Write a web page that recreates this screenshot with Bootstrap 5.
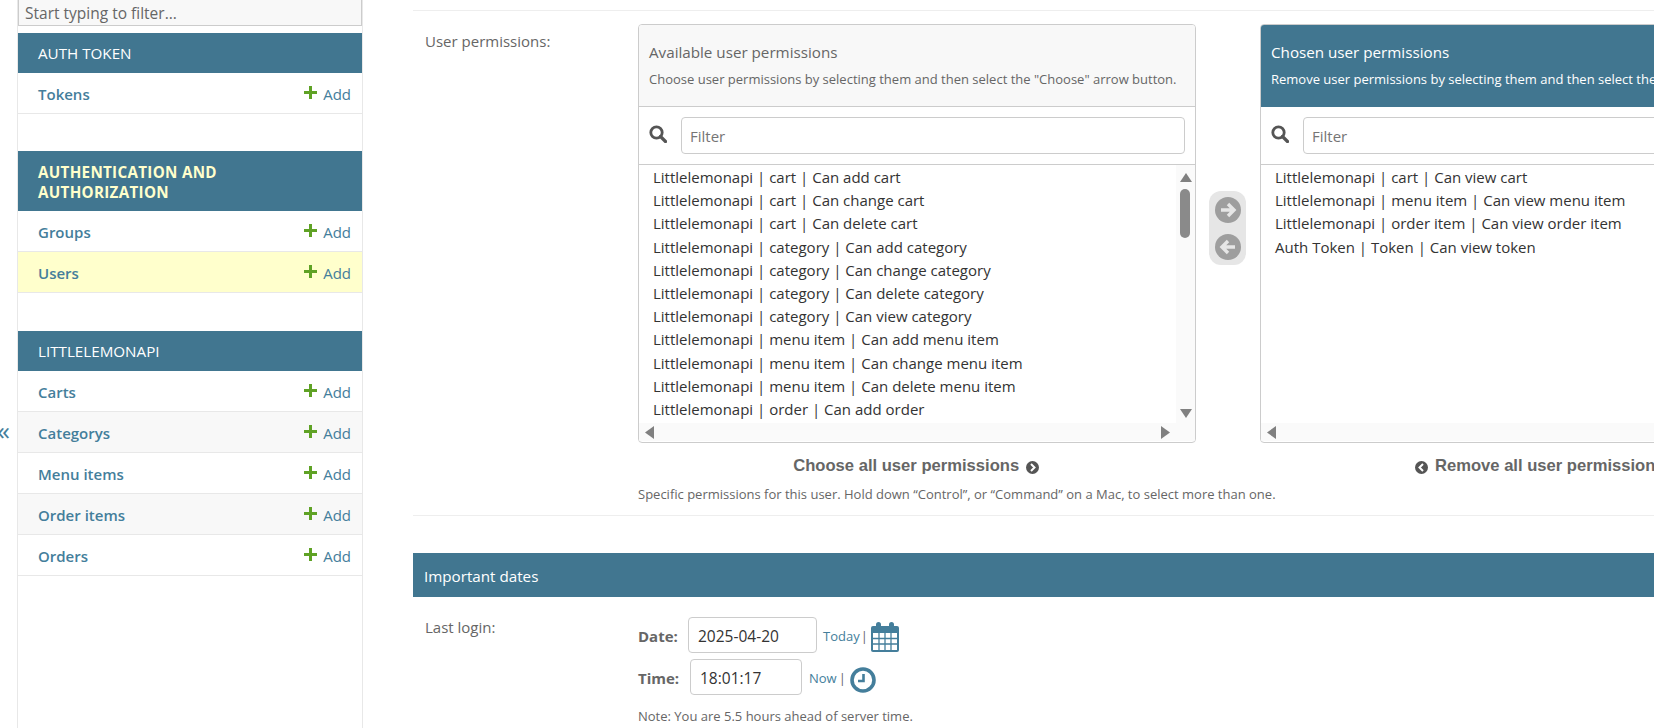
<!DOCTYPE html>
<html lang="en">
<head>
  <meta charset="UTF-8">
  <meta name="viewport" content="width=device-width, initial-scale=1.0">
  <title>Change user | Django site admin</title>
  <link href="https://cdn.jsdelivr.net/npm/bootstrap@5.3.0/dist/css/bootstrap.min.css" rel="stylesheet">
  <style>
    html, body { height: 728px; overflow: hidden; }
    body { font-family: "Open Sans", "Noto Sans", sans-serif; font-size: 15px; color: #666; background: #fff; }
    a { color: #447e9b; text-decoration: none; }

    .toggle-col { width: 17px; flex: none; color: #447e9b; font-size: 26px; line-height: 1; padding-top: 417px; margin-left: -3px; margin-right: 3px; }
    .side-nav { width: 346px; flex: none; height: 728px; border-left: 1px solid #e8e8e8; border-right: 1px solid #e8e8e8; }
    .side-filter { display: block; width: 100%; height: 26px; margin-bottom: 7px; padding: 0 6px; background: #f8f8f8; border: 1px solid #ccc; border-top: 0; font-size: 15.500px; color: #666; line-height: 26px; white-space: nowrap; }
    .app-group { margin-bottom: 37px; }
    .app-group + .app-group { margin-bottom: 38px; }
    .app-head { background: #417690; color: #fff; font-size: 15.200px; line-height: 20px; padding: 10px 20px; }
    .app-head.is-current { color: #ffc; font-weight: 700; letter-spacing: .3px; padding: 11px 20px 9px; }
    .model-row { height: 41px; padding: 2px 11px 0 20px; border-bottom: 1px solid #e8e8e8; font-size: 15px; }
    .model-row strong { font-weight: 600; }
    .model-row.alt { background: #f8f8f8; }
    .model-row.is-current { background: #ffc; }
    .add-link svg { margin-right: 6px; margin-top: -7px; }

    .main-col { margin-left: 50px; flex: 1 1 auto; min-width: 0; overflow: hidden; height: 728px; }
    .field-row { padding: 13px 12px 0; border-top: 1px solid #eee; margin-top: 10px; height: 506px; border-bottom: 1px solid #eee; }
    .field-label { width: 213px; flex: none; padding-top: 6px; }
    .picker { width: 558px; height: 419px; flex: none; border: 1px solid #ccc; border-radius: 4px; overflow: hidden; }
    .picker-head { height: 82px; background: #f8f8f8; border-bottom: 1px solid #ccc; padding: 17px 9px 0 10px; font-size: 15.200px; line-height: 20px; color: #666; }
    .picker-head small { display: block; font-size: 13px; line-height: 16px; margin-top: 9px; white-space: nowrap; }
    .picker-head.is-chosen { background: #417690; color: #fff; border-bottom-color: #417690; }
    .picker-filter { height: 58px; padding: 10px 10px 0 10px; border-bottom: 1px solid #ccc; }
    .picker-filter svg { flex: none; margin-right: 14px; }
    .filter-box { height: 37px; border: 1px solid #ccc; border-radius: 4px; padding: 0 8px; line-height: 37px; flex: 1 1 auto; font-size: 15px; color: #757575; white-space: nowrap; overflow: hidden; }
    .opt-area { height: 258px; padding-top: 1px; color: #333; font-size: 15px; line-height: 23.200px; white-space: nowrap; overflow: hidden; padding-left: 14px; }
    .vbar { width: 19px; flex: none; background: #fafafa; }
    .vbar-thumb { width: 10px; height: 49px; background: #8a8a8a; border-radius: 5px; margin: 7px 0 0 4px; }
    .down-arrow { margin-top: 171px; }
    .hbar { height: 18px; background: #fafafa; padding: 0 6px; }
    .hbar-end { margin-right: 19px; }

    .mover { width: 37px; height: 74px; margin: 167px 14px 0 13px; background: #e6e6e6; border-radius: 12px; flex: none; padding-top: 6px; }
    .mover svg { display: block; margin: 0 auto 11px; }

    .all-links { margin-top: 11px; font-family: "Liberation Sans", Arial, sans-serif; font-weight: 700; font-size: 16.600px; line-height: 24px; color: #666; }
    .all-left { width: 558px; flex: none; text-align: center; margin-right: 64px; white-space: nowrap; }
    .all-right { width: 558px; flex: none; text-align: center; white-space: nowrap; }
    .all-links svg { vertical-align: -3px; margin: 0 2px; }
    .help-line { font-size: 13px; line-height: 16px; margin-top: 8px; white-space: nowrap; }

    .section-head { background: #417690; color: #fff; font-size: 15.200px; line-height: 20px; padding: 13px 11px; margin-top: 37px; height: 44px; }
    .date-row { padding: 20px 12px 0; }
    .date-line { height: 36px; margin-bottom: 6px; }
    .date-line b { color: #666; width: 50px; flex: none; font-size: 15px; padding-top: 2px; }
    .date-line.t-line b { width: 52px; }
    .val-box { height: 36px; border: 1px solid #ccc; border-radius: 4px; color: #333; font-size: 15.500px; line-height: 37px; padding: 0 9px; }
    .date-box { width: 129px; }
    .time-box { width: 112px; }
    .quick { font-size: 13px; margin-left: 6px; padding-top: 3px; }
    .sep-mark { font-size: 13px; margin-left: 1px; padding-top: 3px; }
    .cal-icon { margin: 4px 0 0 3px; }
    .t-line .quick { margin-left: 7px; }
    .t-line .sep-mark { margin-left: 2px; }
    .clock-icon { margin: 6px 0 0 4px; }
    .date-row .field-label { margin-top: -1px; }
    .note-line { font-size: 13px; margin-top: 12px; white-space: nowrap; }
  </style>
</head>
<body class="d-flex">
  <div class="toggle-col">&laquo;</div>

  <nav class="side-nav">
    <div class="side-filter">Start typing to filter...</div>

    <div class="app-group">
      <div class="app-head">AUTH TOKEN</div>
      <div class="model-row d-flex align-items-center justify-content-between"><a href="#"><strong>Tokens</strong></a><a class="add-link" href="#"><svg width="13" height="13" viewBox="0 0 13 13"><path d="M5 0h3v5h5v3H8v5H5V8H0V5h5z" fill="#5fa225"/></svg>Add</a></div>
    </div>

    <div class="app-group">
      <div class="app-head is-current">AUTHENTICATION AND<br>AUTHORIZATION</div>
      <div class="model-row d-flex align-items-center justify-content-between"><a href="#"><strong>Groups</strong></a><a class="add-link" href="#"><svg width="13" height="13" viewBox="0 0 13 13"><path d="M5 0h3v5h5v3H8v5H5V8H0V5h5z" fill="#5fa225"/></svg>Add</a></div>
      <div class="model-row is-current d-flex align-items-center justify-content-between"><a href="#"><strong>Users</strong></a><a class="add-link" href="#"><svg width="13" height="13" viewBox="0 0 13 13"><path d="M5 0h3v5h5v3H8v5H5V8H0V5h5z" fill="#5fa225"/></svg>Add</a></div>
    </div>

    <div class="app-group">
      <div class="app-head">LITTLELEMONAPI</div>
      <div class="model-row d-flex align-items-center justify-content-between"><a href="#"><strong>Carts</strong></a><a class="add-link" href="#"><svg width="13" height="13" viewBox="0 0 13 13"><path d="M5 0h3v5h5v3H8v5H5V8H0V5h5z" fill="#5fa225"/></svg>Add</a></div>
      <div class="model-row alt d-flex align-items-center justify-content-between"><a href="#"><strong>Categorys</strong></a><a class="add-link" href="#"><svg width="13" height="13" viewBox="0 0 13 13"><path d="M5 0h3v5h5v3H8v5H5V8H0V5h5z" fill="#5fa225"/></svg>Add</a></div>
      <div class="model-row d-flex align-items-center justify-content-between"><a href="#"><strong>Menu items</strong></a><a class="add-link" href="#"><svg width="13" height="13" viewBox="0 0 13 13"><path d="M5 0h3v5h5v3H8v5H5V8H0V5h5z" fill="#5fa225"/></svg>Add</a></div>
      <div class="model-row alt d-flex align-items-center justify-content-between"><a href="#"><strong>Order items</strong></a><a class="add-link" href="#"><svg width="13" height="13" viewBox="0 0 13 13"><path d="M5 0h3v5h5v3H8v5H5V8H0V5h5z" fill="#5fa225"/></svg>Add</a></div>
      <div class="model-row d-flex align-items-center justify-content-between"><a href="#"><strong>Orders</strong></a><a class="add-link" href="#"><svg width="13" height="13" viewBox="0 0 13 13"><path d="M5 0h3v5h5v3H8v5H5V8H0V5h5z" fill="#5fa225"/></svg>Add</a></div>
    </div>
  </nav>

  <main class="main-col">
    <div class="field-row">
      <div class="d-flex">
        <div class="field-label">User permissions:</div>

        <div class="picker">
          <div class="picker-head">Available user permissions<small>Choose user permissions by selecting them and then select the "Choose" arrow button.</small></div>
          <div class="picker-filter d-flex">
            <svg class="mt-2" width="18" height="18" viewBox="0 0 18 18"><circle cx="7.500" cy="7.500" r="5.700" fill="none" stroke="#555" stroke-width="2.800"/><path d="M11.500 11.500l5 5" stroke="#555" stroke-width="3.200" stroke-linecap="round"/></svg>
            <div class="filter-box">Filter</div>
          </div>
          <div class="d-flex">
            <div class="opt-area flex-grow-1">
              Littlelemonapi | cart | Can add cart<br>
              Littlelemonapi | cart | Can change cart<br>
              Littlelemonapi | cart | Can delete cart<br>
              Littlelemonapi | category | Can add category<br>
              Littlelemonapi | category | Can change category<br>
              Littlelemonapi | category | Can delete category<br>
              Littlelemonapi | category | Can view category<br>
              Littlelemonapi | menu item | Can add menu item<br>
              Littlelemonapi | menu item | Can change menu item<br>
              Littlelemonapi | menu item | Can delete menu item<br>
              Littlelemonapi | order | Can add order
            </div>
            <div class="vbar pt-2">
              <svg class="d-block ms-1" width="12" height="9" viewBox="0 0 12 9"><path d="M6 0l6 9H0z" fill="#808080"/></svg>
              <div class="vbar-thumb"></div>
              <svg class="d-block ms-1 down-arrow" width="12" height="9" viewBox="0 0 12 9"><path d="M0 0h12L6 9z" fill="#808080"/></svg>
            </div>
          </div>
          <div class="hbar d-flex justify-content-between align-items-center">
            <svg width="9" height="13" viewBox="0 0 9 13"><path d="M9 0v13L0 6.500z" fill="#808080"/></svg>
            <svg class="hbar-end" width="9" height="13" viewBox="0 0 9 13"><path d="M0 0v13l9-6.500z" fill="#808080"/></svg>
          </div>
        </div>

        <div class="mover">
          <svg width="26" height="26" viewBox="0 0 26 26"><circle cx="13" cy="13" r="13" fill="#9e9e9e"/><path d="M6 13h12M13 7l6 6-6 6" fill="none" stroke="#e6e6e6" stroke-width="3.400"/></svg>
          <svg width="26" height="26" viewBox="0 0 26 26"><circle cx="13" cy="13" r="13" fill="#9e9e9e"/><path d="M20 13H8M13 7l-6 6 6 6" fill="none" stroke="#e6e6e6" stroke-width="3.400"/></svg>
        </div>

        <div class="picker">
          <div class="picker-head is-chosen">Chosen user permissions<small>Remove user permissions by selecting them and then select the "Remove" arrow button.</small></div>
          <div class="picker-filter d-flex">
            <svg class="mt-2" width="18" height="18" viewBox="0 0 18 18"><circle cx="7.500" cy="7.500" r="5.700" fill="none" stroke="#555" stroke-width="2.800"/><path d="M11.500 11.500l5 5" stroke="#555" stroke-width="3.200" stroke-linecap="round"/></svg>
            <div class="filter-box">Filter</div>
          </div>
          <div class="opt-area">
            Littlelemonapi | cart | Can view cart<br>
            Littlelemonapi | menu item | Can view menu item<br>
            Littlelemonapi | order item | Can view order item<br>
            Auth Token | Token | Can view token
          </div>
          <div class="hbar d-flex justify-content-between align-items-center">
            <svg width="9" height="13" viewBox="0 0 9 13"><path d="M9 0v13L0 6.500z" fill="#808080"/></svg>
          </div>
        </div>
      </div>

      <div class="all-links d-flex">
        <div class="field-label p-0"></div>
        <div class="all-left">Choose all user permissions <svg width="13" height="13" viewBox="0 0 13 13"><circle cx="6.500" cy="6.500" r="6.500" fill="#555"/><path d="M5 3l3.500 3.500L5 10" fill="none" stroke="#fff" stroke-width="2"/></svg></div>
        <div class="all-right"><svg width="13" height="13" viewBox="0 0 13 13"><circle cx="6.500" cy="6.500" r="6.500" fill="#555"/><path d="M8 3L4.500 6.500 8 10" fill="none" stroke="#fff" stroke-width="2"/></svg> Remove all user permissions</div>
      </div>

      <div class="d-flex help-line">
        <div class="field-label p-0"></div>
        <div>Specific permissions for this user. Hold down “Control”, or “Command” on a Mac, to select more than one.</div>
      </div>
    </div>

    <div class="section-head">Important dates</div>

    <div class="date-row d-flex">
      <div class="field-label p-0">Last login:</div>
      <div>
        <div class="date-line d-flex align-items-center">
          <b>Date:</b>
          <div class="val-box date-box">2025-04-20</div>
          <a class="quick" href="#">Today</a><span class="sep-mark">|</span>
          <svg class="cal-icon" width="28" height="30" viewBox="0 0 28 30"><rect x="0" y="4" width="28" height="26" rx="2" fill="#447e9b"/><rect x="2" y="11" width="24" height="17" fill="#fff"/><path d="M2 16.500h24M2 22h24M8 11v17M14 11v17M20 11v17" stroke="#447e9b" stroke-width="1.300"/><rect x="5" y="0" width="5" height="8" rx="2.500" fill="#447e9b"/><rect x="18" y="0" width="5" height="8" rx="2.500" fill="#447e9b"/></svg>
        </div>
        <div class="date-line t-line d-flex align-items-center">
          <b>Time:</b>
          <div class="val-box time-box">18:01:17</div>
          <a class="quick" href="#">Now</a><span class="sep-mark">|</span>
          <svg class="clock-icon" width="26" height="26" viewBox="0 0 26 26"><circle cx="13" cy="13" r="11" fill="none" stroke="#447e9b" stroke-width="3.600"/><path d="M13.500 7v7H8" fill="none" stroke="#447e9b" stroke-width="2.600"/></svg>
        </div>
        <div class="note-line">Note: You are 5.5 hours ahead of server time.</div>
      </div>
    </div>
  </main>
</body>
</html>
